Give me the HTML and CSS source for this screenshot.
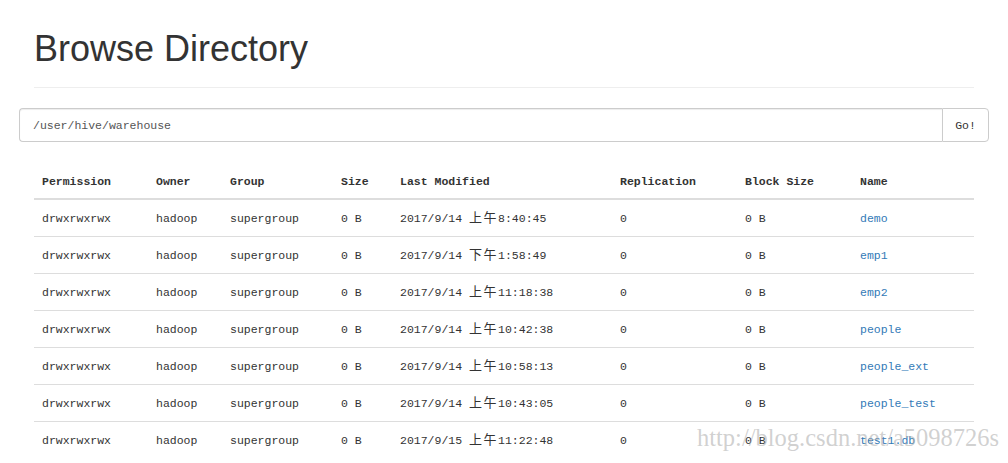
FILE: index.html
```html
<!DOCTYPE html>
<html>
<head>
<meta charset="utf-8">
<link rel="stylesheet" href="styles.css">
</head>
<body>
<div class="page">
  <div class="page-header">
    <h1>Browse Directory</h1>
  </div>
  <form class="search">
    <input class="path" type="text" value="/user/hive/warehouse">
    <button class="go" type="button">Go!</button>
  </form>
  <table class="listing">
    <colgroup>
      <col class="c-perm"><col class="c-owner"><col class="c-group"><col class="c-size">
      <col class="c-mod"><col class="c-rep"><col class="c-block"><col class="c-name">
    </colgroup>
    <thead>
      <tr><th>Permission</th><th>Owner</th><th>Group</th><th>Size</th><th>Last Modified</th><th>Replication</th><th>Block Size</th><th>Name</th></tr>
    </thead>
    <tbody>
      <tr><td>drwxrwxrwx</td><td>hadoop</td><td>supergroup</td><td>0 B</td><td>2017/9/14 <span class="cjk">上午</span>8:40:45</td><td>0</td><td>0 B</td><td><a href="#">demo</a></td></tr>
      <tr><td>drwxrwxrwx</td><td>hadoop</td><td>supergroup</td><td>0 B</td><td>2017/9/14 <span class="cjk">下午</span>1:58:49</td><td>0</td><td>0 B</td><td><a href="#">emp1</a></td></tr>
      <tr><td>drwxrwxrwx</td><td>hadoop</td><td>supergroup</td><td>0 B</td><td>2017/9/14 <span class="cjk">上午</span>11:18:38</td><td>0</td><td>0 B</td><td><a href="#">emp2</a></td></tr>
      <tr><td>drwxrwxrwx</td><td>hadoop</td><td>supergroup</td><td>0 B</td><td>2017/9/14 <span class="cjk">上午</span>10:42:38</td><td>0</td><td>0 B</td><td><a href="#">people</a></td></tr>
      <tr><td>drwxrwxrwx</td><td>hadoop</td><td>supergroup</td><td>0 B</td><td>2017/9/14 <span class="cjk">上午</span>10:58:13</td><td>0</td><td>0 B</td><td><a href="#">people_ext</a></td></tr>
      <tr><td>drwxrwxrwx</td><td>hadoop</td><td>supergroup</td><td>0 B</td><td>2017/9/14 <span class="cjk">上午</span>10:43:05</td><td>0</td><td>0 B</td><td><a href="#">people_test</a></td></tr>
      <tr><td>drwxrwxrwx</td><td>hadoop</td><td>supergroup</td><td>0 B</td><td>2017/9/15 <span class="cjk">上午</span>11:22:48</td><td>0</td><td>0 B</td><td><a href="#">test1.db</a></td></tr>
    </tbody>
  </table>
</div>
<div class="watermark">http://blog.csdn.net/a5098726s</div>
</body>
</html>
```
FILE: styles.css
```css
html, body {
  margin: 0;
  padding: 0;
  background: #fff;
  color: #333;
  overflow: hidden;
}
body {
  font-family: "Liberation Mono", "Noto Sans CJK SC", monospace;
  font-size: 11.5px;
}
.page {
  padding: 0 19px;
}
.page-header {
  margin: 0 15px;
  padding: 29px 0 18px;
  border-bottom: 1px solid #eee;
}
h1 {
  margin: 0;
  font-family: "Liberation Sans", Arial, sans-serif;
  font-weight: 400;
  font-size: 36px;
  line-height: 40px;
  color: #333;
}
.search {
  display: flex;
  margin: 20px 0 0;
  height: 34px;
}
.path {
  flex: 1;
  box-sizing: border-box;
  height: 34px;
  margin: 0;
  padding: 1px 13px 0;
  border: 1px solid #ccc;
  border-right: none;
  border-radius: 4px 0 0 4px;
  font-family: "Liberation Mono", monospace;
  font-size: 11.5px;
  color: #555;
  outline: none;
  box-shadow: inset 0 1px 1px rgba(0,0,0,.075);
}
.go {
  box-sizing: border-box;
  width: 47px;
  height: 34px;
  margin: 0;
  padding: 1px 0 0;
  border: 1px solid #ccc;
  border-radius: 0 4px 4px 0;
  background: #fff;
  font-family: "Liberation Mono", monospace;
  font-size: 11.5px;
  color: #333;
}
.listing {
  margin: 20px 15px 0;
  width: 940px;
  border-collapse: collapse;
  table-layout: fixed;
}
.c-perm { width: 114px; }
.c-owner { width: 74px; }
.c-group { width: 111px; }
.c-size { width: 59px; }
.c-mod { width: 220px; }
.c-rep { width: 125px; }
.c-block { width: 115px; }
.c-name { width: 122px; }
.listing th {
  text-align: left;
  font-weight: 700;
  padding: 10px 8px 6px;
  height: 20px;
  line-height: 20px;
  border-bottom: 2px solid #ddd;
  color: #333;
  white-space: nowrap;
}
.listing td {
  padding: 9px 8px 7px;
  height: 20px;
  line-height: 20px;
  border-top: 1px solid #ddd;
  white-space: nowrap;
  vertical-align: middle;
}
.listing tbody tr:first-child td {
  border-top: none;
}
.cjk {
  font-family: "Noto Sans CJK SC", sans-serif;
  font-size: 13px;
  line-height: 1;
  letter-spacing: 1.5px;
  vertical-align: baseline;
}
a {
  color: #337ab7;
  text-decoration: none;
}
.watermark {
  position: absolute;
  left: 697px;
  top: 424px;
  font-family: "Liberation Serif", serif;
  font-size: 24.5px;
  color: rgba(170, 170, 170, 0.55);
  white-space: nowrap;
  pointer-events: none;
}
```
